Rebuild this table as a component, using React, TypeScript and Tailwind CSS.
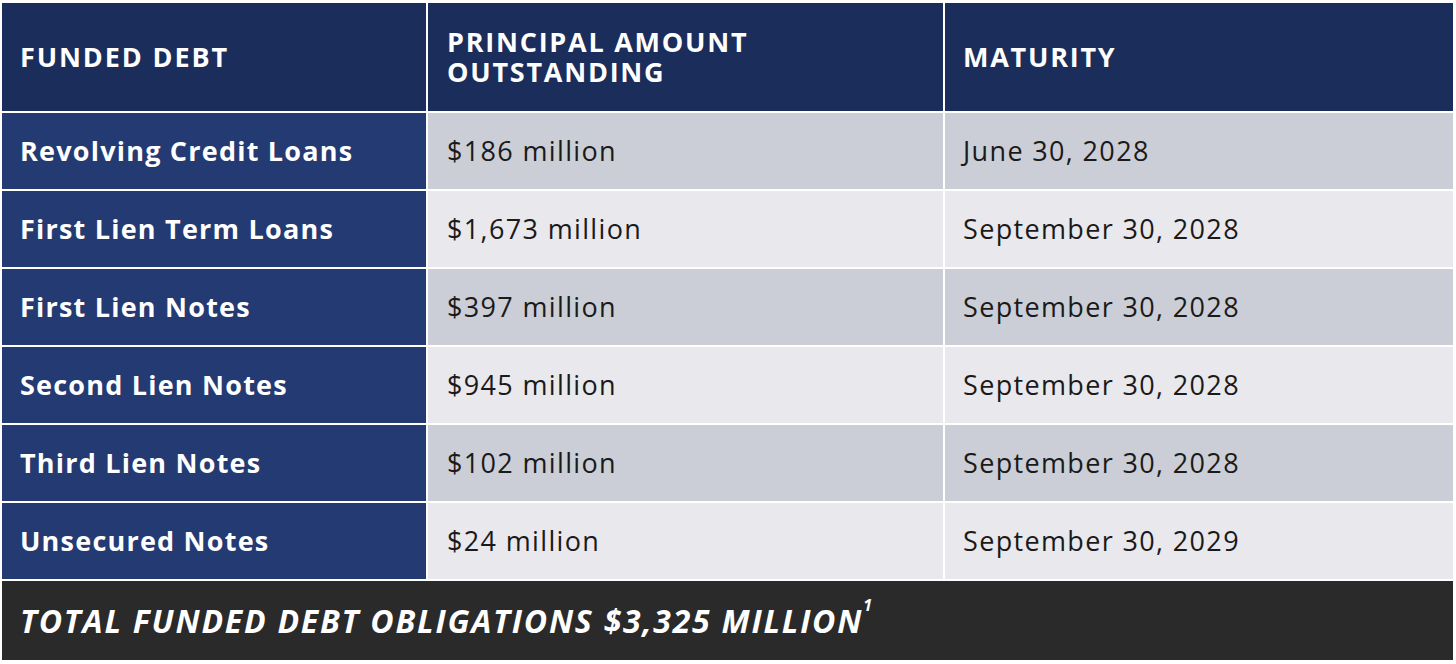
import React from "react";

const rows = [
  ["Revolving Credit Loans", "$186 million", "June 30, 2028"],
  ["First Lien Term Loans", "$1,673 million", "September 30, 2028"],
  ["First Lien Notes", "$397 million", "September 30, 2028"],
  ["Second Lien Notes", "$945 million", "September 30, 2028"],
  ["Third Lien Notes", "$102 million", "September 30, 2028"],
  ["Unsecured Notes", "$24 million", "September 30, 2029"],
];

export default function App() {
  return (
    <div
      className="w-[1456px] h-[664px] bg-white pt-[3px] pl-[2px] pr-[3px] overflow-hidden"
      style={{ fontFamily: "'Open Sans', 'Liberation Sans', sans-serif" }}
    >
      <div className="grid grid-cols-[424px_515px_1fr] gap-[2px]">
        <div className="h-[108px] bg-[#1b2d5b] flex items-center pl-[18px] text-white font-bold text-[27px] leading-[30px] tracking-[0.07em]">
          FUNDED DEBT
        </div>
        <div className="h-[108px] bg-[#1b2d5b] flex items-center pl-[19px] text-white font-bold text-[27px] leading-[30px] tracking-[0.065em]">
          <span>
            PRINCIPAL AMOUNT
            <br />
            OUTSTANDING
          </span>
        </div>
        <div className="h-[108px] bg-[#1b2d5b] flex items-center pl-[18px] text-white font-bold text-[27px] leading-[30px] tracking-[0.065em]">
          MATURITY
        </div>
        {rows.map((r, i) => {
          const bg = i % 2 === 0 ? "bg-[#cbced6]" : "bg-[#e8e8ed]";
          return (
            <React.Fragment key={i}>
              <div className="h-[76px] bg-[#243a73] flex items-center pl-[18px] text-white font-bold text-[27px] tracking-[0.045em]">
                {r[0]}
              </div>
              <div className={`h-[76px] ${bg} flex items-center pl-[19px] text-[#1a1a1a] text-[27px] tracking-[0.05em]`}>
                {r[1]}
              </div>
              <div className={`h-[76px] ${bg} flex items-center pl-[18px] text-[#1a1a1a] text-[27px] tracking-[0.05em]`}>
                {r[2]}
              </div>
            </React.Fragment>
          );
        })}
        <div className="col-span-3 h-[79px] bg-[#2a2a2a] flex items-center pl-[18px] text-white font-bold italic text-[32px] tracking-[0.055em]">
          <span>
            TOTAL FUNDED DEBT OBLIGATIONS $3,325 MILLION
            <sup className="text-[16px] align-[14px] tracking-normal">1</sup>
          </span>
        </div>
      </div>
    </div>
  );
}
